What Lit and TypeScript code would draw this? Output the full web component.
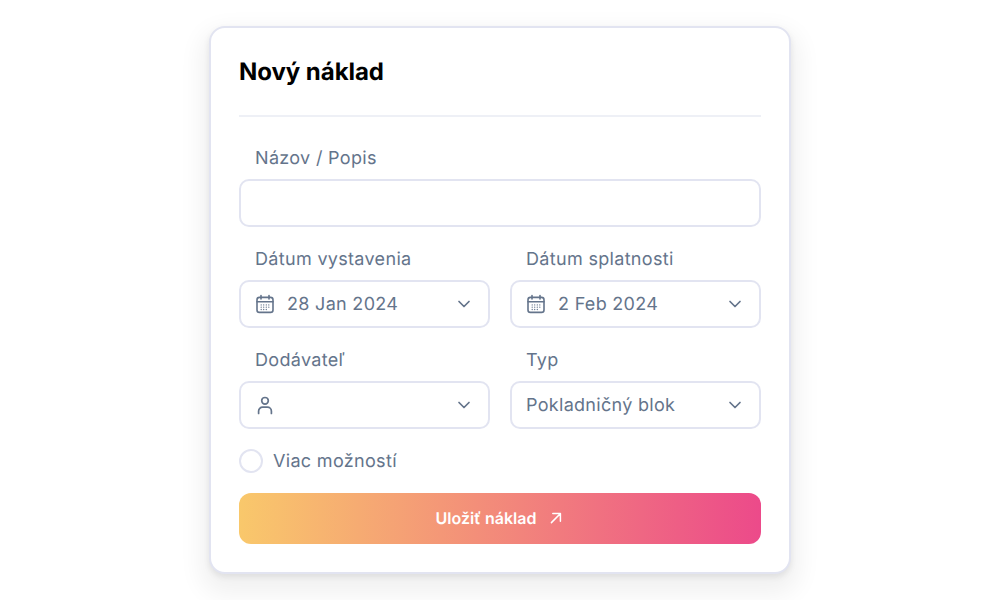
import { LitElement, html, css } from "lit";
import { customElement } from "lit/decorators.js";

const chevron = html`<svg class="chev" width="20" height="20" viewBox="0 0 20 20" fill="none" stroke="#64748b" stroke-width="1.7" stroke-linecap="round" stroke-linejoin="round"><path d="M5 7.5l5 5 5-5"/></svg>`;
const calendar = html`<svg class="ico" width="20" height="20" viewBox="0 0 20 20" fill="none" stroke="#64748b" stroke-width="1.6" stroke-linecap="round" stroke-linejoin="round"><rect x="2" y="3.4" width="16" height="15" rx="2.4"/><path d="M2 7.8h16M6 1.6v3.4M14 1.6v3.4"/><g stroke-width="1.3"><path d="M6.2 10.9h.01M8.7 10.9h.01M11.3 10.9h.01M13.8 10.9h.01M6.2 13.2h.01M8.7 13.2h.01M11.3 13.2h.01M13.8 13.2h.01M6.2 15.5h.01M8.7 15.5h.01M11.3 15.5h.01"/></g></svg>`;
const user = html`<svg class="ico" width="20" height="20" viewBox="0 0 20 20" fill="none" stroke="#64748b" stroke-width="1.7" stroke-linecap="round" stroke-linejoin="round"><circle cx="10" cy="5.8" r="3.3"/><path d="M3.6 18.4v-2.2a4 4 0 0 1 4-4h4.8a4 4 0 0 1 4 4v2.2"/></svg>`;
const arrow = html`<svg width="16" height="16" viewBox="0 0 16 16" fill="none" stroke="#fff" stroke-width="1.5" stroke-linecap="round" stroke-linejoin="round"><path d="M3.4 12.6l8.8-8.8M4.8 3.6h7.6v7.6"/></svg>`;

@customElement("app-root")
export class AppRoot extends LitElement {
  static styles = css`
    :host { display: flex; justify-content: center; width: 1000px; height: 600px; overflow: hidden; background: #fff; font-family: Inter, "Liberation Sans", sans-serif; text-rendering: geometricPrecision; padding-top: 26px; box-sizing: border-box; }
    .card { box-sizing: border-box; width: 582px; height: 548px; background: #fff; border: 2px solid #e2e4f1; border-radius: 16px; padding: 28px; box-shadow: 0 12px 24px 8px rgba(0,0,0,.06), 0 3px 6px rgba(0,0,0,.08); display: flex; flex-direction: column; }
    h1 { margin: 0; font-size: 24px; line-height: 32px; font-weight: 700; color: #000; letter-spacing: -0.05px; }
    hr { border: 0; height: 2px; background: #eef0f6; margin: 27px 0 0; width: 100%; }
    .grid { display: grid; grid-template-columns: 1fr 1fr; column-gap: 20px; margin-top: 29px; }
    .full { grid-column: 1 / -1; }
    .field { display: flex; flex-direction: column; gap: 7px; margin-bottom: 20px; }
    label { font-size: 18px; line-height: 26px; font-weight: 425; letter-spacing: 0.32px; color: #64748b; padding-left: 16px; }
    .box { box-sizing: border-box; height: 48px; border: 2px solid #e2e4f1; border-radius: 10px; display: flex; align-items: center; padding: 0 14px; font-size: 18px; font-weight: 425; letter-spacing: 0.3px; color: #64748b; background: #fff; gap: 12px; }
    .box .val { flex: 1; white-space: nowrap; }
    .chev { flex: none; }
    .more { display: flex; align-items: center; gap: 10px; font-size: 18px; font-weight: 425; letter-spacing: 0.32px; color: #64748b; height: 24px; }
    .radio { width: 24px; height: 24px; box-sizing: border-box; border: 2px solid #e2e4f1; border-radius: 50%; }
    button { margin-top: 20px; height: 51px; border: 0; border-radius: 12px; background: linear-gradient(90deg, #f9c86b 0%, #ec4a8a 100%); color: #fff; font: 600 16px Inter, "Liberation Sans", sans-serif; text-rendering: geometricPrecision; display: flex; align-items: center; justify-content: center; gap: 12px; padding: 0 0 2px; width: 100%; }
  `;
  private sel(icon: unknown, text: string) {
    return html`<div class="box">${icon}<span class="val">${text}</span>${chevron}</div>`;
  }
  render() {
    return html`<div class="card">
      <h1>Nový náklad</h1>
      <hr />
      <div class="grid">
        <div class="field full"><label>Názov / Popis</label><div class="box"></div></div>
        <div class="field"><label>Dátum vystavenia</label>${this.sel(calendar, "28 Jan 2024")}</div>
        <div class="field"><label>Dátum splatnosti</label>${this.sel(calendar, "2 Feb 2024")}</div>
        <div class="field"><label>Dodávateľ</label>${this.sel(user, "")}</div>
        <div class="field"><label>Typ</label>${this.sel(null, "Pokladničný blok")}</div>
      </div>
      <div class="more"><span class="radio"></span>Viac možností</div>
      <button>Uložiť náklad ${arrow}</button>
    </div>`;
  }
}
